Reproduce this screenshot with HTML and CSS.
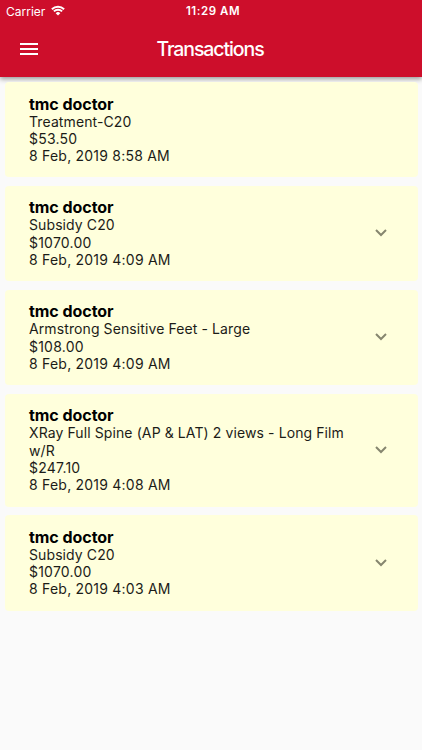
FILE: index.html
```html
<!DOCTYPE html>
<html lang="en">
<head>
    <title>Transactions</title>
    <meta charset="utf-8">
    <meta name="viewport" content="width=device-width, initial-scale=1.0">
    <link rel="stylesheet" href="styles.css">
</head>

<body>

    <header>
        <div class="status-bar">
            <div class="carrier">
                <span>Carrier</span>
                <svg class="wifi" viewBox="0 0 14 11">
                    <path d="M0.9 4.2a8.8 8.8 0 0 1 12.2 0M2.9 6.4a5.9 5.9 0 0 1 8.2 0" />
                    <path class="wifi-dot" d="M7 10.6L4.7 8.2a3.3 3.3 0 0 1 4.6 0z" />
                </svg>
            </div>
            <span class="clock">11:29 AM</span>
        </div>
        <nav>
            <button class="menu" aria-label="Menu">
                <svg viewBox="0 0 18 12">
                    <path d="M0 0h18v2H0zM0 5h18v2H0zM0 10h18v2H0z" />
                </svg>
            </button>
            <h1>Transactions</h1>
        </nav>
    </header>

    <main class="container">
        <article class="card">
            <div class="info">
                <h2>tmc doctor</h2>
                <p class="description">Treatment-C20</p>
                <p>$53.50</p>
                <p>8 Feb, 2019 8:58 AM</p>
            </div>
        </article>

        <article class="card">
            <div class="info">
                <h2>tmc doctor</h2>
                <p class="description">Subsidy C20</p>
                <p>$1070.00</p>
                <p>8 Feb, 2019 4:09 AM</p>
            </div>
            <svg class="arrow" viewBox="0 0 12 8"><path d="M1 1l5 5 5-5" /></svg>
        </article>

        <article class="card">
            <div class="info">
                <h2>tmc doctor</h2>
                <p class="description">Armstrong Sensitive Feet - Large</p>
                <p>$108.00</p>
                <p>8 Feb, 2019 4:09 AM</p>
            </div>
            <svg class="arrow" viewBox="0 0 12 8"><path d="M1 1l5 5 5-5" /></svg>
        </article>

        <article class="card">
            <div class="info">
                <h2>tmc doctor</h2>
                <p class="description">XRay Full Spine (AP &amp; LAT) 2 views - Long Film w/R</p>
                <p>$247.10</p>
                <p>8 Feb, 2019 4:08 AM</p>
            </div>
            <svg class="arrow" viewBox="0 0 12 8"><path d="M1 1l5 5 5-5" /></svg>
        </article>

        <article class="card">
            <div class="info">
                <h2>tmc doctor</h2>
                <p class="description">Subsidy C20</p>
                <p>$1070.00</p>
                <p>8 Feb, 2019 4:03 AM</p>
            </div>
            <svg class="arrow" viewBox="0 0 12 8"><path d="M1 1l5 5 5-5" /></svg>
        </article>
    </main>

</body>
</html>
```
FILE: styles.css
```css
body {
    margin: 0;
    background-color: #fafafa;
    font-family: Inter, "Liberation Sans", sans-serif;
    color: #1c1c18;
}

header {
    height: 77px;
    background-color: #cd0e2b;
    color: white;
    box-shadow: 0 2px 5px rgba(0, 0, 0, .4);
}

.status-bar {
    display: grid;
    grid-template-columns: 1fr auto 1fr;
    align-items: center;
    height: 22px;
    padding: 0 6px;
    font-size: 12px;
}

.carrier {
    display: flex;
    align-items: center;
    gap: 6px;
    height: 20px;
}

.wifi {
    width: 14px;
    height: 11px;
    padding-bottom: 2px;
    fill: none;
    stroke: white;
    stroke-width: 2;
}

.wifi .wifi-dot {
    fill: white;
    stroke: none;
}

.clock {
    padding-left: 4px;
    font-size: 11.5px;
    font-weight: 600;
    letter-spacing: 0.55px;
}

nav {
    display: grid;
    grid-template-columns: 56px 1fr 56px;
    align-items: center;
    height: 54px;
}

.menu {
    height: 54px;
    padding: 3px 0 0 1px;
    border: none;
    background: none;
}

.menu svg {
    width: 18px;
    height: 12px;
    fill: white;
}

h1 {
    margin: 0;
    padding-right: 2px;
    font-size: 19.5px;
    font-weight: 500;
    letter-spacing: -1.1px;
    text-align: center;
}

.container {
    display: grid;
    gap: 8.5px;
    padding: 5px 4px 5px 4.5px;
}

.card {
    display: flex;
    align-items: center;
    padding: 12.5px 31px 13px 24.5px;
    border-radius: 4px;
    background-color: #ffffdc;
}

.info {
    flex: 1;
    padding-right: 22px;
}

h2 {
    margin: 0;
    color: black;
    font-size: 16px;
    font-weight: 700;
    line-height: 18px;
    letter-spacing: -0.05px;
}

p {
    margin: 0;
    font-size: 14px;
    line-height: 17.33px;
    letter-spacing: 0.22px;
}

.description {
    letter-spacing: 0.1px;
}

.arrow {
    width: 12px;
    height: 8px;
    fill: none;
    stroke: #86866f;
    stroke-width: 2;
}
```
